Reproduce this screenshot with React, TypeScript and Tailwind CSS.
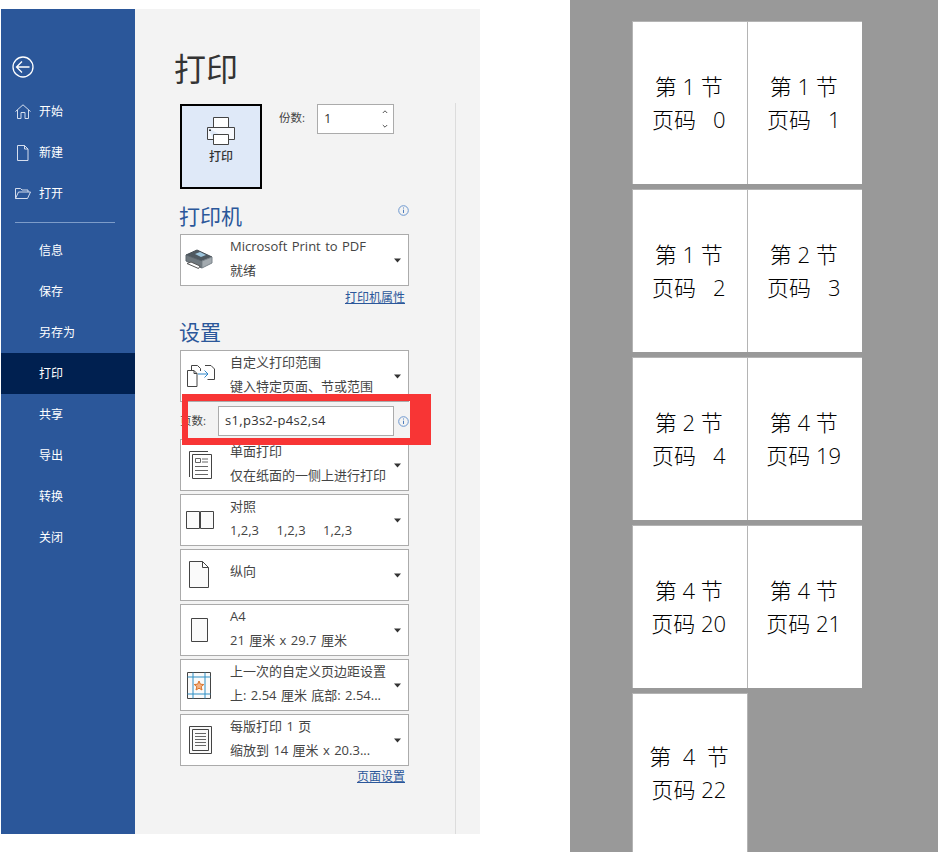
import type { ReactNode } from 'react';

const FONT = '[font-family:"Open_Sans","Noto_Sans_CJK_SC",sans-serif]';

function Svg({ children, className }: { children: ReactNode; className?: string }) {
  return (
    <svg width="32" height="32" viewBox="0 0 32 32" fill="none" stroke="#444" strokeWidth="1" className={className}>
      {children}
    </svg>
  );
}

const BackIcon = () => (
  <svg width="22" height="22" viewBox="0 0 22 22" fill="none" stroke="#fff" strokeWidth="1.3">
    <circle cx="11" cy="11" r="10" />
    <path d="M4.500 11h13M10 5.500 4.500 11l5.500 5.500" />
  </svg>
);
const HomeIcon = () => (
  <svg width="16" height="15" viewBox="0 0 16 15" fill="none" stroke="#d5deee" strokeWidth="1">
    <path d="M.5 7.500 8 .8l7.500 6.700M2.500 6v8.500h3.500V8.500h4v6h3.500V6" />
  </svg>
);
const NewIcon = () => (
  <svg width="16" height="16" viewBox="0 0 16 16" fill="none" stroke="#d5deee" strokeWidth="1">
    <path d="M2.500.5h7l3.500 3.500v11.500H2.500zM9.500.5V4H13" />
  </svg>
);
const OpenIcon = () => (
  <svg width="16" height="11" viewBox="0 0 16 11" fill="none" stroke="#d5deee" strokeWidth="1">
    <path d="M.5 10.500v-10h5l1.500 1.500h6v2M.5 10.500l3-6.500h12l-3 6.500z" />
  </svg>
);

function InfoIcon() {
  return (
    <svg width="11" height="11" viewBox="0 0 11 11" fill="none" className="shrink-0">
      <circle cx="5.5" cy="5.500" r="4.800" stroke="#6c97cf" />
      <path d="M5.500 4.700v3.300M5.500 2.500v1" stroke="#4f7fbd" />
    </svg>
  );
}

function Caret() {
  return (
    <svg width="7" height="5" viewBox="0 0 7 5" className="shrink-0">
      <path d="M0 .5h7L3.500 4.500z" fill="#333" />
    </svg>
  );
}

const PrinterColorIcon = () => (
  <Svg>
    <path d="M1 11 12 6l15 7-10 4z" fill="#4f5960" stroke="#454e55" />
    <path d="M10 10l5-2 6 3-5 2z" fill="#9dc5dc" stroke="none" />
    <path d="M1 11v6l16 7v-7z" fill="#6f787e" stroke="#5b646b" />
    <path d="M17 17v7l10-5v-6z" fill="#a3aaaf" stroke="#7c858c" />
    <path d="M2 19.500 6 18l9 4-1.500 2.500z" fill="#fff" stroke="#555" />
  </Svg>
);
const RangeIcon = () => (
  <Svg>
    <path d="M6.500 10V5.500h6l3 3v2.500" />
    <path d="M2.500 10.500H9l3 3v13H2.500z" fill="#fff" />
    <path d="M9 10.500v3h3" />
    <path d="M13 14h10M19.500 10.500 23 14l-3.500 3.500" stroke="#2e86c9" />
    <path d="M20 5.500h6l3.500 3.500v10.500h-7" />
  </Svg>
);
const SingleSideIcon = () => (
  <Svg>
    <path d="M4.500 28V2.500H23" />
    <path d="M7.500 5.500h19v24h-19z" />
    <path d="M10.500 9.500h5v4h-5z" stroke="#666" />
    <path d="M17 10h6M17 13h6M10 17.500h13M10 21.500h13M10 25.500h13" stroke="#666" />
  </Svg>
);
const CollateIcon = () => (
  <Svg>
    <path d="M1.500 7.500h13v17h-13zM15.500 7.500h13v17h-13z" fill="#fafafa" />
  </Svg>
);
const PortraitIcon = () => (
  <Svg>
    <path d="M4.500 2.500h13l6 6v20h-19zM17.500 2.500v6h6" fill="#fafafa" />
  </Svg>
);
const A4Icon = () => (
  <Svg>
    <path d="M6.500 4.500h16v23h-16z" fill="#fafafa" />
  </Svg>
);
const MarginIcon = () => (
  <Svg>
    <path d="M2.500 3.500h23v26h-23z" fill="#fafafa" />
    <path d="M2.500 8h23M2.500 25h23M8 3.500v26M20 3.500v26" stroke="#2f8fc4" />
    <path d="m14 12 1.400 3.200 3.400.3-2.600 2.200.8 3.300-3-1.800-3 1.800.8-3.300-2.600-2.200 3.400-.3z" fill="#f4b183" stroke="#d9742b" />
  </Svg>
);
const PerSheetIcon = () => (
  <Svg>
    <path d="M4.500 2.500h22v27h-22z" fill="#fafafa" />
    <path d="M7.500 5.500h16v21h-16z" />
    <path d="M10 9.500h11M10 12.500h11M10 15.500h11M10 18.500h11M10 21.500h11" stroke="#666" />
  </Svg>
);

type DropdownProps = {
  icon: ReactNode;
  first: string;
  second?: string;
  className?: string;
};

function Dropdown({ icon, first, second, className = '' }: DropdownProps) {
  return (
    <div className={`flex h-[52px] w-[229px] items-center border border-[#ababab] bg-white ${className}`}>
      <div className="flex w-[49px] shrink-0 justify-start pl-[4px]">{icon}</div>
      <div className={`min-w-0 flex-1 self-start whitespace-pre text-[13px] leading-[24px] [word-spacing:1px] text-[#444] ${second ? '-mt-px' : 'pt-[9px]'}`}>
        <div>{first}</div>
        {second && <div>{second}</div>}
      </div>
      <div className="mr-[7px] flex shrink-0 items-center">
        <Caret />
      </div>
    </div>
  );
}

function NavItem({ label, icon, active }: { label: string; icon?: ReactNode; active?: boolean }) {
  return (
    <div className={`flex h-[41px] items-center pl-[14px] text-[12px] text-white ${active ? 'bg-[#002050]' : ''}`}>
      <div className="flex w-[24px] shrink-0 items-center">{icon}</div>
      <span>{label}</span>
    </div>
  );
}

function Cell({ title, page, wide, className = 'pt-[48px]' }: { title: string; page: string; wide?: boolean; className?: string }) {
  return (
    <div className={`h-full bg-white pr-[2px] text-center text-[22px] font-light leading-[33px] whitespace-pre text-black ${wide ? 'w-[115px]' : 'w-[114px]'} ${className}`}>
      <div>{title}</div>
      <div>{page}</div>
    </div>
  );
}

function Sheet({ left, right }: { left: [string, string]; right: [string, string] }) {
  return (
    <div className="flex h-[163px] w-[230px] shrink-0 border-t border-l border-[#b4b4b4]">
      <Cell title={left[0]} page={left[1]} />
      <div className="w-px bg-[#b4b4b4]" />
      <Cell title={right[0]} page={right[1]} wide />
    </div>
  );
}

export default function App() {
  return (
    <div className={`flex h-[852px] w-[951px] overflow-hidden bg-white ${FONT}`}>
      <div className="ml-px mt-[9px] flex h-[825px] w-[479px] shrink-0">
        {/* left menu */}
        <div className="w-[134px] shrink-0 bg-[#2b579a]">
          <div className="ml-[11px] mt-[47px] h-[22px] w-[22px]">
            <BackIcon />
          </div>
          <div className="mt-[13px]">
            <NavItem label="开始" icon={<HomeIcon />} />
            <NavItem label="新建" icon={<NewIcon />} />
            <NavItem label="打开" icon={<OpenIcon />} />
          </div>
          <div className="ml-[14px] mt-[8px] h-px w-[100px] bg-[#7d9cc9]" />
          <div className="mt-[7px]">
            <NavItem label="信息" />
            <NavItem label="保存" />
            <NavItem label="另存为" />
            <NavItem label="打印" active />
            <NavItem label="共享" />
            <NavItem label="导出" />
            <NavItem label="转换" />
            <NavItem label="关闭" />
          </div>
        </div>

        {/* print settings */}
        <div className="relative flex flex-1 bg-[#f3f3f3]">
          <div className="w-[320px] shrink-0 pl-[45px]">
            <h1 className="-ml-[6px] mt-[38px] h-[44px] text-[32px] leading-[44px] text-[#333]">打印</h1>
            <div className="mt-[13px] flex items-start">
              <div className="flex h-[85px] w-[82px] flex-col items-center border-2 border-black bg-[#dfe9f8]">
                <svg width="30" height="30" viewBox="0 0 30 30" fill="none" stroke="#444" strokeWidth="1" className="mt-[10px]">
                  <path d="M7.500 11V1.500h15V11" fill="#fff" />
                  <path d="M1.500 11.500h27v12h-6M7.500 23.500h-6v-12" fill="#f7f9fd" />
                  <path d="M7.500 18.500h15v10h-15z" fill="#fff" />
                  <rect x="3" y="13.500" width="2" height="1.500" fill="#333" stroke="none" />
                </svg>
                <span className="mt-[2px] text-[12px] font-medium leading-[17px] text-[#333]">打印</span>
              </div>
              <span className="ml-[17px] w-[38px] pt-[5px] text-[11.500px] leading-[18px] text-[#444]">份数:</span>
              <div className="flex h-[30px] w-[77px] items-center justify-between border border-[#ababab] bg-white pl-[6px] pr-[5px] text-[13px] text-[#333]">
                <span>1</span>
                <svg width="6" height="20" viewBox="0 0 6 20" fill="none" stroke="#555">
                  <path d="M.8 4 3 1.800 5.200 4M.8 16 3 18.200 5.200 16" />
                </svg>
              </div>
            </div>

            <div className="flex h-[45px] w-[229px] items-end justify-between pb-[4px]">
              <span className="-ml-px text-[21px] leading-[28px] text-[#2b579a]">打印机</span>
              <span className="mb-[14px]">
                <InfoIcon />
              </span>
            </div>
            <Dropdown icon={<PrinterColorIcon />} first="Microsoft Print to PDF" second="就绪" />
            <div className="h-[24px] w-[225px] text-right text-[12px] leading-[24px] text-[#2b579a] underline">打印机属性</div>

            <div className="-ml-px flex h-[40px] items-end pb-[4px] text-[21px] leading-[28px] text-[#2b579a]">设置</div>
            <Dropdown icon={<RangeIcon />} first="自定义打印范围" second="键入特定页面、节或范围" />
            <div className="mt-[4px] flex h-[30px] w-[229px] items-center">
              <span className="w-[38px] shrink-0 text-[11.500px] text-[#444]">页数:</span>
              <div className="flex h-[30px] w-[176px] shrink-0 items-center border border-[#ababab] bg-white pl-[6px] text-[13px] tracking-[0.3px] text-[#333]">
                s1,p3s2-p4s2,s4
              </div>
              <span className="ml-[4px]">
                <InfoIcon />
              </span>
            </div>
            <Dropdown className="mt-[3px]" icon={<SingleSideIcon />} first="单面打印" second="仅在纸面的一侧上进行打印" />
            <Dropdown className="mt-[3px]" icon={<CollateIcon />} first="对照" second="1,2,3    1,2,3    1,2,3" />
            <Dropdown className="mt-[3px]" icon={<PortraitIcon />} first="纵向" />
            <Dropdown className="mt-[3px]" icon={<A4Icon />} first="A4" second="21 厘米 x 29.7 厘米" />
            <Dropdown className="mt-[3px]" icon={<MarginIcon />} first="上一次的自定义页边距设置" second="上: 2.54 厘米 底部: 2.54..." />
            <Dropdown className="mt-[3px]" icon={<PerSheetIcon />} first="每版打印 1 页" second="缩放到 14 厘米 x 20.3..." />
            <div className="h-[22px] w-[225px] text-right text-[12px] leading-[22px] text-[#2b579a] underline">页面设置</div>
          </div>
          <div className="mt-[94px] w-px bg-[#dcdcdc]" />

          {/* highlight drawn over the form */}
          <div className="absolute left-[47px] top-[385px] h-[51px] w-[249px] border-y-[7px] border-r-[21px] border-l-[6px] border-[#f83535]" />
        </div>
      </div>

      {/* print preview */}
      <div className="ml-[90px] flex h-[852px] w-[368px] shrink-0 flex-col gap-[5px] overflow-hidden bg-[#999999] pl-[62px] pt-[21px]">
        <Sheet left={['第 1 节', '页码   0']} right={['第 1 节', '页码   1']} />
        <Sheet left={['第 1 节', '页码   2']} right={['第 2 节', '页码   3']} />
        <Sheet left={['第 2 节', '页码   4']} right={['第 4 节', '页码 19']} />
        <Sheet left={['第 4 节', '页码 20']} right={['第 4 节', '页码 21']} />
        <div className="flex h-[163px] w-[116px] shrink-0 border-x border-t border-[#b4b4b4]">
          <Cell title="第  4  节" page="页码 22" wide className="pt-[46px]" />
        </div>
      </div>
    </div>
  );
}
